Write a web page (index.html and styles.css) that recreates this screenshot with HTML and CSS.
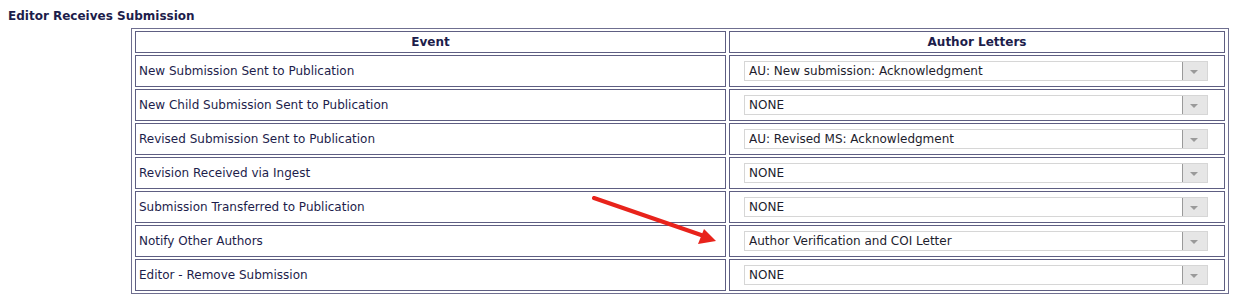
FILE: index.html
```html
<!DOCTYPE html>
<html lang="en">
<head>
    <meta charset="UTF-8">
    <title>Editor Receives Submission</title>
    <link rel="stylesheet" href="styles.css">
</head>
<body>
    <div class="section-title">Editor Receives Submission</div>

    <div class="letters-wrap">
        <table class="letters-table">
            <tr>
                <th class="col-event">Event</th>
                <th class="col-letter">Author Letters</th>
            </tr>
            <tr>
                <td>New Submission Sent to Publication</td>
                <td class="letter-cell"><div class="select-box"><select><option>AU: New submission: Acknowledgment</option></select></div></td>
            </tr>
            <tr>
                <td>New Child Submission Sent to Publication</td>
                <td class="letter-cell"><div class="select-box"><select><option>NONE</option></select></div></td>
            </tr>
            <tr>
                <td>Revised Submission Sent to Publication</td>
                <td class="letter-cell"><div class="select-box"><select><option>AU: Revised MS: Acknowledgment</option></select></div></td>
            </tr>
            <tr>
                <td>Revision Received via Ingest</td>
                <td class="letter-cell"><div class="select-box"><select><option>NONE</option></select></div></td>
            </tr>
            <tr>
                <td>Submission Transferred to Publication</td>
                <td class="letter-cell"><div class="select-box"><select><option>NONE</option></select></div></td>
            </tr>
            <tr>
                <td>Notify Other Authors</td>
                <td class="letter-cell"><div class="select-box"><select><option>Author Verification and COI Letter</option></select></div></td>
            </tr>
            <tr>
                <td>Editor - Remove Submission</td>
                <td class="letter-cell"><div class="select-box"><select><option>NONE</option></select></div></td>
            </tr>
        </table>

        <!-- red annotation arrow pointing at the Notify Other Authors letter -->
        <svg class="callout-arrow" width="140" height="60" viewBox="0 0 140 60">
            <line x1="2" y1="2" x2="112" y2="40" stroke="#e8231b" stroke-width="4" stroke-linecap="round"/>
            <polygon points="124,45 106,48 112,33" fill="#e8231b"/>
        </svg>
    </div>
</body>
</html>
```

FILE: styles.css
```css
body {
    margin: 8px;
    font-family: "DejaVu Sans", Verdana, sans-serif;
    font-size: 12px;
    color: #1d1d4b;
    background-color: #fff;
}
.section-title {
    font-weight: bold;
    font-size: 12px;
    height: 20px;
    line-height: 16px;
}
.letters-wrap {
    position: relative;
    margin-left: 123px;
    width: 1098px;
}
.letters-table {
    width: 100%;
    border: 1px solid #6f6f90;
    border-spacing: 3px 2px;
    padding: 0;
}
.letters-table th,
.letters-table td {
    border: 1px solid #5e5e82;
    text-align: left;
    padding: 0 3px;
    height: 30px;
}
.letters-table th {
    text-align: center;
    font-weight: bold;
    height: 20px;
}
.col-event {
    width: 583px;
}
.letter-cell {
    padding: 0 16px 0 14px !important;
}
.select-box {
    position: relative;
    height: 20px;
}
.select-box select {
    -webkit-appearance: none;
    appearance: none;
    width: 100%;
    height: 20px;
    border: 1px solid #d6d6d6;
    background-color: #fff;
    font-family: "DejaVu Sans", Verdana, sans-serif;
    font-size: 12px;
    color: #1d1d2d;
    padding: 0 4px;
    border-radius: 0;
    outline: none;
}
.select-box::after {
    content: "";
    position: absolute;
    top: 1px;
    right: 1px;
    width: 24px;
    height: 18px;
    border-left: 1px solid #9a9a9a;
    background-color: #e6e6e6;
    pointer-events: none;
}
.select-box::before {
    content: "";
    position: absolute;
    top: 9px;
    right: 10px;
    border-left: 4px solid transparent;
    border-right: 4px solid transparent;
    border-top: 4px solid #9a9a9a;
    z-index: 1;
    pointer-events: none;
}
.callout-arrow {
    position: absolute;
    left: 461px;
    top: 168px;
}
```
